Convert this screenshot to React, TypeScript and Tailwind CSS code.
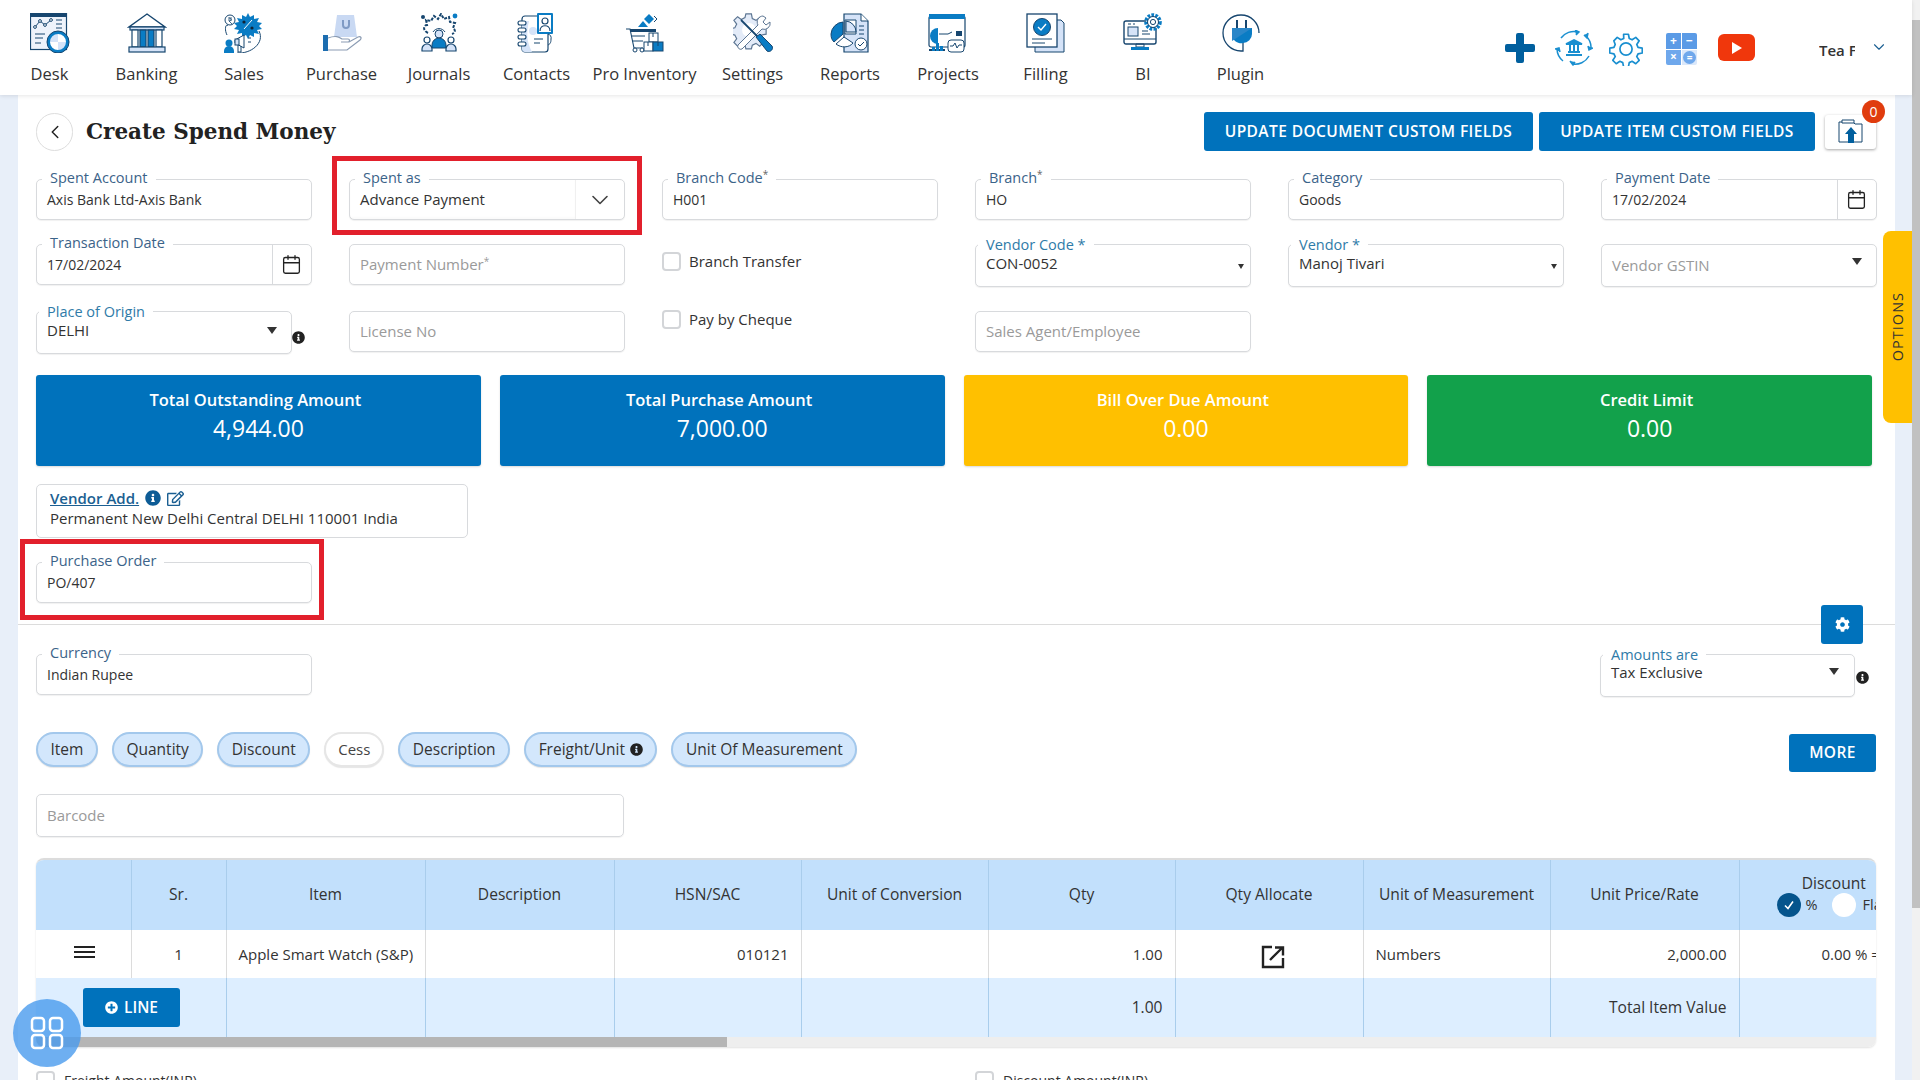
import React from "react";
import clsx from "clsx";
import { Calendar, ChevronDown, ChevronLeft } from "lucide-react";
import { FaInfoCircle, FaRegEdit, FaCog, FaPlusCircle } from "react-icons/fa";

const N = "#17466f";
const B = "#0a7cc4";
const L = "#d5e3f8";

const I = ({ children }: { children: React.ReactNode }) => (
  <svg width="40" height="40" viewBox="0 0 40 40" fill="none" stroke={N} strokeWidth="1">
    {children}
  </svg>
);

const Desk = () => (
  <I>
    <rect x="0.5" y="0.5" width="36" height="36" fill="#eef3fb" strokeWidth="1.2" />
    <rect x="0.5" y="0.5" width="36" height="3" fill={N} />
    <polyline points="5,14 10,8 15,12 21,7" stroke={N} />
    <circle cx="5" cy="14" r="1.4" fill="#fff" /><circle cx="10" cy="8" r="1.4" fill="#fff" /><circle cx="15" cy="12" r="1.4" fill="#fff" /><circle cx="21" cy="7" r="1.4" fill="#fff" />
    <path d="M26 7h6M26 11h6M26 15h6M5 21h10M5 25h8M5 30h6" />
    <circle cx="28" cy="29" r="11" fill={B} stroke={N} />
    <path d="M28 21a8 8 0 0 1 8 8h-8zM28 29h-8a8 8 0 0 0 8 8z" fill="#fff" stroke="none" />
    <path d="M28 21a8 8 0 0 0-8 8h8zM28 29h8a8 8 0 0 1-8 8z" fill={L} stroke="none" />
  </I>
);
const Banking = () => (
  <I>
    <path d="M20 1 L38 14 H2 Z" fill="#fff" strokeWidth="1.4" />
    <rect x="3" y="14" width="34" height="3" fill={L} strokeWidth="1.2" />
    {[5, 13, 21, 29].map((x, i) => (
      <rect key={x} x={x} y="17" width="6" height="17" fill={i === 1 || i === 2 ? B : "#fff"} strokeWidth="1.2" />
    ))}
    <rect x="2" y="34" width="36" height="5" fill={L} strokeWidth="1.2" />
  </I>
);
const Sales = () => (
  <I>
    <circle cx="6" cy="7" r="5" fill="#fff" />
    <path d="M4 5h4M4 7h4M5 5c3 0 3 3 0 3l3 3" strokeWidth=".8" />
    <path d="M24 0l2 4 4-2 0 4 5-1-2 4 5 1-3 3 3 3-5 1 2 4-5-1 0 4-4-2-2 4-2-4-4 2 0-4-5 1 2-4-5-1 3-3-3-3 5-1-2-4 5 1 0-4 4 2z" fill={B} stroke="none" />
    <path d="M20 16l8-9" stroke="#fff" /><circle cx="20" cy="9" r="1.6" fill="#123" stroke="none" /><circle cx="28" cy="15" r="1.6" fill="#123" stroke="none" />
    <circle cx="5" cy="30" r="3.5" fill={B} stroke="none" />
    <path d="M0 40v-2a5 5 0 0 1 10 0v2z" fill={B} stroke="none" />
    <path d="M11 27l9-5v13l-9-5z" fill="#fff" /><rect x="11" y="26" width="4" height="6" fill={L} />
    <path d="M14 32v7h3v-6" />
    <path d="M24 25h3M24 29h3M3 22C0 16 2 10 4 13M13 40c14 1 28-10 22-22" />
  </I>
);
const Purchase = () => (
  <I>
    <path d="M15 2h17l3 22H12z" fill="#c9d9f3" stroke="none" />
    <path d="M21 7v5a3 3 0 0 0 6 0V7" stroke="#7f9ac4" strokeWidth="2" />
    <rect x="1" y="22" width="5" height="16" fill="#1c6db0" stroke="none" />
    <path d="M6 25c8-3 11-1 14 1h6c2 0 2 3 0 3h-7 8l9-5c3-1 4 1 2 3L25 37H6" fill="#fff" stroke="#8b9cb3" strokeWidth="1.2" />
  </I>
);
const Journals = () => (
  <I>
    <path d="M9 20C3 17 5 12 8 12l-1-5 5 1 3-5 4 3 3-5 3 5 5-2 1 5 5 1-2 5c3 2 2 5-1 6" strokeWidth="2" strokeDasharray="3 1.4" />
    <circle cx="36" cy="3" r="2.4" fill={B} stroke="none" /><circle cx="4" cy="4" r="2" fill={N} stroke="none" />
    <path d="M14 19a7 7 0 0 1 12 0" strokeWidth="1" />
    <circle cx="20" cy="21" r="4" fill={L} />
    <path d="M13 35v-3a7 7 0 0 1 14 0v3z" fill={B} />
    <circle cx="8" cy="27" r="3" fill="#fff" strokeWidth="1.2" /><circle cx="32" cy="27" r="3" fill="#fff" strokeWidth="1.2" />
    <path d="M3 38v-2a5 5 0 0 1 10 0v2zM27 38v-2a5 5 0 0 1 10 0v2z" fill={L} strokeWidth="1.2" />
  </I>
);
const Contacts = () => (
  <I>
    <rect x="5" y="3" width="26" height="36" rx="3" fill="#fff" strokeWidth="1.2" />
    <path d="M5 8h7c-3 12-2 22 3 31H8a3 3 0 0 1-3-3z" fill={L} stroke="none" />
    {[8, 15, 22, 29].map((y) => (
      <rect key={y} x="1" y={y} width="8" height="4" rx="2" fill="#fff" strokeWidth="1.1" />
    ))}
    <rect x="20" y="0" width="16" height="21" rx="1" fill={B} stroke="none" />
    <rect x="22" y="2" width="12" height="17" fill="#fff" stroke="none" />
    <circle cx="28" cy="8" r="3" stroke={N} strokeWidth="1.2" />
    <path d="M23 18c0-7 10-7 10 0" strokeWidth="1.2" />
    <path d="M31 21a4 4 0 0 1 3 5c0 4-1 5-3 6" />
    <path d="M17 26h9M17 30h6" />
    <circle cx="16" cy="18" r="4" fill={L} stroke="none" />
  </I>
);
const Inventory = () => (
  <I>
    <path d="M24 1l5 5-5 5-5-5z" fill={B} stroke="none" />
    <path d="M29 3l3 3-3 3" fill="#fff" />
    <path d="M13 14l5-6 5 6z" fill={B} stroke="none" />
    <path d="M1 16h4l4 19h9" strokeWidth="1.1" />
    <rect x="5" y="16" width="26" height="3" fill={N} stroke="none" />
    <path d="M7 23h13M8 28h10" />
    <circle cx="10" cy="37" r="2" fill="#fff" /><circle cx="17" cy="37" r="2" fill="#fff" />
    <rect x="24" y="20" width="9" height="9" fill="#fff" /><rect x="19" y="29" width="9" height="9" fill="#fff" /><rect x="28" y="29" width="10" height="9" fill={B} />
    <path d="M28 20v4M23 29v4M33 29v4" />
  </I>
);
const Settings = () => (
  <I>
    <path d="M14 1h6l1 5 4 2 4-3 4 4-3 4 1 3 5 1v6l-5 1-1 4 3 4-4 4-4-3-4 2-1 4h-6l-1-4-4-2-4 3-4-4 3-4-2-4-5-1v-6l5-1 2-4-3-4 4-4 4 3 4-2z" fill="#e3ebf8" stroke="#5d7693" strokeWidth="1.3" transform="scale(.92)" />
    <circle cx="16" cy="17" r="7" fill="#fff" stroke="none" />
    <path d="M30 2a6 6 0 0 0-5 9L5 31a3 3 0 0 0 4 4L29 15a6 6 0 0 0 8-7l-4 3-3-3 3-4z" fill="#fff" stroke="#5d7693" transform="translate(0 1)" />
    <path d="M8 7l17 17" stroke="#17466f" strokeWidth="1.8" />
    <path d="M23 24l4-3 12 12c2 3-2 7-5 5z" fill={B} stroke={N} />
  </I>
);
const Reports = () => (
  <I>
    <path d="M14 1h17l7 7v31H14z" fill={L} strokeWidth="1.2" />
    <path d="M31 1v7h7" fill="#fff" />
    <path d="M15 7h11v14H15z" fill="#fff" />
    <path d="M16 8a11 11 0 0 1 10 11H16z" fill={L} />
    <path d="M13 9a13 13 0 0 0-12 12c0 4 1 6 3 8l9-8z" fill={B} />
    <path d="M14 24l-8 7c5 4 13 4 17-1z" fill="#fff" stroke={N} />
    <path d="M29 13h5M29 17h5M29 21h5" />
    <circle cx="31" cy="31" r="6" fill="#fff" /><path d="M28 31l2 2 4-4" />
  </I>
);
const Projects = () => (
  <I>
    <rect x="1" y="3" width="36" height="31" rx="2" fill="#fff" strokeWidth="1.2" />
    <rect x="1" y="1" width="36" height="5" fill={B} stroke="none" />
    <path d="M10 15a8 8 0 0 0 0 16z" fill={B} stroke="none" />
    <path d="M11 21h9l4-2" /><rect x="28" y="18" width="6" height="5" fill={N} stroke="none" />
    <path d="M1 37h16" strokeWidth="2" />
    <rect x="4" y="34" width="3" height="4" fill={B} stroke="none" /><rect x="8" y="30" width="3" height="8" fill={B} stroke="none" /><rect x="12" y="33" width="3" height="5" fill={B} stroke="none" />
    <rect x="20" y="27" width="16" height="12" rx="3" fill="#fff" />
    <path d="M22 33h3l2-3 2 5 2-3h3" />
  </I>
);
const Filling = () => (
  <I>
    <path d="M9 7h26l3 3v29H9z" fill={L} strokeWidth="1" />
    <rect x="1" y="1" width="30" height="33" fill="#fff" strokeWidth="1.3" />
    <circle cx="16" cy="14" r="8.5" fill={B} stroke={N} />
    <path d="M12 14l3 3 5-6" stroke="#fff" strokeWidth="1.4" />
    <path d="M6 26h20M6 30h13" />
  </I>
);
const BI = () => (
  <I>
    <rect x="1" y="8" width="32" height="23" rx="2" fill="#fff" strokeWidth="1.4" />
    <path d="M1 26h32" />
    <rect x="5" y="14" width="10" height="9" fill={L} />
    <path d="M5 11h3M10 11h2M19 18h6M19 21h8M13 31h8v3h-8z" />
    <path d="M8 34h18v3H8z" fill={B} stroke="none" />
    <circle cx="30" cy="9" r="7" fill="#fff" stroke={B} strokeWidth="3.6" strokeDasharray="2.6 1.3" />
    <circle cx="30" cy="9" r="5.5" stroke={N} strokeWidth="1" />
    <circle cx="30" cy="9" r="2.6" fill="#fff" stroke={N} />
  </I>
);
const Plugin = () => (
  <I>
    <path d="M38 20A18 18 0 1 0 20 38h2v-10" strokeWidth="1.3" />
    <path d="M16 7v8M25 7v8" strokeWidth="2" />
    <path d="M11 15h20v6a9 9 0 0 1-9 9 9 9 0 0 1-11-9z" fill={B} stroke="none" />
    <path d="M11 15h20L11 28z" fill="#2a86c8" stroke="none" />
  </I>
);

const nav: [string, React.FC, string][] = [
  ["Desk", Desk, "w-[97px]"],
  ["Banking", Banking, "w-[97px]"],
  ["Sales", Sales, "w-[98px]"],
  ["Purchase", Purchase, "w-[97px]"],
  ["Journals", Journals, "w-[98px]"],
  ["Contacts", Contacts, "w-[97px]"],
  ["Pro Inventory", Inventory, "w-[119px]"],
  ["Settings", Settings, "w-[97px]"],
  ["Reports", Reports, "w-[98px]"],
  ["Projects", Projects, "w-[98px]"],
  ["Filling", Filling, "w-[97px]"],
  ["BI", BI, "w-[98px]"],
  ["Plugin", Plugin, "w-[97px]"],
];

const Header = () => (
  <header className="relative z-10 flex h-[95px] shrink-0 bg-white pl-[1px] shadow-[0_1px_4px_rgba(0,0,0,0.1)]">
    {nav.map(([name, Icon, w]) => (
      <div key={name} className={clsx("flex flex-col items-center pt-[13px]", w)}>
        <Icon />
        <span className="mt-[10px] whitespace-nowrap text-[16.5px] leading-[22px] text-[#333]">{name}</span>
      </div>
    ))}
    <div className="ml-[216px] flex items-start">
      <svg className="mt-[33px]" width="30" height="30" viewBox="0 0 30 30"><path d="M11 2a2 2 0 0 1 2-2h4a2 2 0 0 1 2 2v9h9a2 2 0 0 1 2 2v4a2 2 0 0 1-2 2h-9v9a2 2 0 0 1-2 2h-4a2 2 0 0 1-2-2v-9H2a2 2 0 0 1-2-2v-4a2 2 0 0 1 2-2h9z" fill="#005f9e" /></svg>
      <svg className="ml-[20px] mt-[30px]" width="38" height="36" viewBox="0 0 38 36" fill="none" stroke="#1a8fd0" strokeWidth="1.5">
        <path d="M6 8A16 16 0 0 1 23 2M31 6a16 16 0 0 1 5 13M34 26a16 16 0 0 1-17 8M8 31a16 16 0 0 1-6-12" />
        <path d="M20 0l4 2-3 3M33 3l-1 5-3-3M38 18l-4 2-1-4M15 31l3 4 2-3M0 19l4-1 1 4" fill="#1a8fd0" />
        <path d="M11 14l8-4 8 4zM11 25h16M13 22h12" fill="#1a8fd0" strokeWidth="1.8" />
        <path d="M15 15v6M19 15v6M23 15v6" strokeWidth="2" />
      </svg>
      <svg className="ml-[16px] mt-[32px]" width="34" height="34" viewBox="0 0 24 24" fill="none" stroke="#1a8fd0" strokeWidth="1.2"><path d="M10.300 1.600h3.400l.6 3 2 .9 2.600-1.700 2.400 2.400-1.700 2.600.9 2 3 .6v3.400l-3 .6-.9 2 1.700 2.600-2.400 2.400-2.600-1.700-2 .9-.6 3h-3.400l-.6-3-2-.9-2.600 1.700-2.400-2.400 1.700-2.600-.9-2-3-.6v-3.400l3-.6.9-2L3.400 6.200l2.400-2.400 2.600 1.700 2-.9z" strokeLinejoin="round" /><circle cx="12" cy="12" r="4.300" /></svg>
      <div className="ml-[23px] mt-[33px] grid h-[32px] w-[31px] grid-cols-2 grid-rows-2 gap-[1px] text-[12px] font-bold leading-none text-white">
        <span className="flex items-center justify-center rounded-tl-[2px] bg-[#5b9be6]">+</span>
        <span className="flex items-center justify-center rounded-tr-[2px] bg-[#5b9be6]">−</span>
        <span className="flex items-center justify-center rounded-bl-[2px] bg-[#6fa8ec]">×</span>
        <span className="flex items-center justify-center rounded-br-[2px] bg-[#dbe8fa]"><span className="flex h-[13px] w-[13px] items-center justify-center rounded-full bg-[#6fa8ec] text-[10px]">=</span></span>
      </div>
      <div className="ml-[21px] mt-[34px] flex h-[27px] w-[37px] items-center justify-center rounded-[6px] bg-[#f0370c]">
        <svg width="10" height="12" viewBox="0 0 10 12"><path d="M0 0l10 6-10 6z" fill="#fff" /></svg>
      </div>
      <span className="ml-[64px] mt-[40px] w-[36px] overflow-hidden whitespace-nowrap text-[15px] font-semibold leading-[20px] text-[#333]">Tea Factory</span>
      <ChevronDown className="ml-[15px] mt-[38px]" size={18} strokeWidth={1.5} color="#1b5f92" />
    </div>
  </header>
);

type FieldProps = { label?: string; sup?: boolean; teal?: boolean; className?: string; children?: React.ReactNode };
const Field = ({ label, sup, teal, className, children }: FieldProps) => (
  <div className={clsx("relative flex h-[41px] items-center rounded-[5px] border border-[#d8dadd] bg-white text-[14px] text-[#333] shadow-[0_1px_1px_rgba(0,0,0,0.06)]", className)}>
    {label && (
      <span className={clsx("absolute whitespace-nowrap bg-white px-[8px] text-[14.5px] leading-[20px]", teal ? "left-[2px] top-[-10px] text-[#2f7ba8]" : "left-[5px] top-[-12px] text-[#3b6389]")}>
        {label}
        {sup && <sup className="text-[10px] text-[#666]">*</sup>}
      </span>
    )}
    {children}
  </div>
);
const Val = ({ children, big }: { children: React.ReactNode; big?: boolean }) => <span className={clsx("pl-[10px] whitespace-nowrap", big && "text-[15px]")}>{children}</span>;
const Ph = ({ children }: { children: React.ReactNode }) => <span className="pl-[10px] whitespace-nowrap text-[15px] text-[#9a9a9a]">{children}</span>;
const DateField = ({ label, value }: { label: string; value: string }) => (
  <Field label={label} className="items-stretch">
    <span className="flex flex-1 items-center pl-[10px] text-[14px]">{value}</span>
    <span className="flex w-[39px] items-center justify-center border-l border-[#d8dadd]">
      <Calendar size={21} strokeWidth={1.5} color="#222" />
    </span>
  </Field>
);
const Check = ({ label }: { label: string }) => (
  <label className="flex items-center gap-[8px] text-[15px] text-[#333]">
    <span className="h-[19px] w-[19px] rounded-[4px] border-2 border-[#d3d5d8] bg-white" />
    {label}
  </label>
);
const Info = ({ className }: { className?: string }) => <FaInfoCircle size={13} color="#222" className={className} />;

const Card = ({ title, value, color }: { title: string; value: string; color: string }) => (
  <div className={clsx("flex h-[91px] flex-col items-center rounded-[3px] pt-[14px] text-white shadow-[0_1px_2px_rgba(0,0,0,0.15)]", color)}>
    <span className="pr-[6px] text-[16.5px] font-semibold leading-[22px]">{title}</span>
    <span className="mt-[1px] text-[23px] leading-[32px]">{value}</span>
  </div>
);

const Pill = ({ children, off }: { children: React.ReactNode; off?: boolean }) => (
  <span className={clsx("flex h-[35px] items-center gap-[5px] rounded-full border-2 leading-none shadow-[0_1px_1px_rgba(0,0,0,0.1)]", off ? "border-[#e6e6e6] bg-white px-[12px] text-[15px] text-[#444]" : "border-[#a3c8ec] bg-[#d3e7fc] px-[12.5px] text-[15.5px] text-[#333]")}>
    {children}
  </span>
);

const widths = ["w-[94px]", "w-[95px]", "w-[199px]", "w-[189px]", "w-[187px]", "w-[187px]", "w-[187px]", "w-[188px]", "w-[187px]", "w-[189px]", "w-[189px]"];
const heads = ["", "Sr.", "Item", "Description", "HSN/SAC", "Unit of Conversion", "Qty", "Qty Allocate", "Unit of Measurement", "Unit Price/Rate"];
const th = "border-r border-[#a9cdec] align-middle text-center text-[15.6px] font-medium text-[#333]";
const td = "border-r border-[#dcdcdc] px-[12px] text-[15px] text-[#333]";
const tf = "border-r border-[#a9cdec] px-[12px] text-[15.6px] text-[#333]";

const Table = () => (
  <div className="mt-[21px] h-[189px] overflow-hidden rounded-[8px] border-t-2 border-[#dcdcdc] shadow-[0_1px_2px_rgba(0,0,0,0.12)]">
    <table className="w-[1881px] table-fixed border-collapse">
      <colgroup>
        <col className="w-[1px]" />
        {widths.map((w, i) => (
          <col key={i} className={w} />
        ))}
      </colgroup>
      <tbody>
        <tr className="h-[70px] bg-[#c2e0fc]">
          <td />
          {heads.map((h) => (
            <td key={h} className={th}>{h}</td>
          ))}
          <td className="whitespace-nowrap align-middle text-[15.6px] font-medium text-[#333]">
            <div className="text-center leading-[20px]">Discount</div>
            <div className="flex items-center gap-[5px] pl-[37px] text-[14.5px]">
              <span className="flex h-[24px] w-[24px] items-center justify-center rounded-full bg-[#05548c]">
                <svg width="12" height="12" viewBox="0 0 12 12" fill="none" stroke="#fff" strokeWidth="1.600"><path d="M2 6.500l3 3 5-7" /></svg>
              </span>
              <span>%</span>
              <span className="ml-[9px] h-[24px] w-[24px] rounded-full bg-white" />
              <span className="ml-[2px]">Flat</span>
            </div>
          </td>
        </tr>
        <tr className="h-[48px] bg-white">
          <td />
          <td className={clsx(td, "text-center")}>
            <div className="mx-auto mb-[5px] h-[12px] w-[21px] translate-x-[1px] border-y-2 border-[#222] after:mt-[3px] after:block after:h-[2px] after:bg-[#222]" />
          </td>
          <td className={clsx(td, "text-center")}>1</td>
          <td className={clsx(td, "whitespace-nowrap")}>Apple Smart Watch (S&amp;P)</td>
          <td className={td} />
          <td className={clsx(td, "text-right")}>010121</td>
          <td className={td} />
          <td className={clsx(td, "text-right")}>1.00</td>
          <td className={clsx(td, "text-center")}>
            <svg className="ml-[73px] mt-[5px]" width="24" height="24" viewBox="0 0 24 24" fill="none" stroke="#222" strokeWidth="2.400"><path d="M11 2H2v20h20v-9M9 15L21 3M14 2.500h8v8" /></svg>
          </td>
          <td className={clsx(td, "whitespace-nowrap")}>Numbers</td>
          <td className={clsx(td, "text-right")}>2,000.00</td>
          <td className="whitespace-nowrap pl-[82px] text-[15px] text-[#333]">0.00 % = 0.00</td>
        </tr>
        <tr className="h-[59px] bg-[#ddeeff]">
          <td />
          <td colSpan={2} className={tf}>
            <button className="ml-[34px] flex h-[39px] w-[97px] items-center justify-center gap-[6px] rounded-[3px] bg-[#0072bc] text-[15.5px] font-semibold text-white">
              <FaPlusCircle size={13} />LINE
            </button>
          </td>
          <td className={tf} /><td className={tf} /><td className={tf} /><td className={tf} />
          <td className={clsx(tf, "text-right font-medium")}>1.00</td>
          <td className={tf} /><td className={tf} />
          <td className={clsx(tf, "whitespace-nowrap text-right font-medium")}>Total Item Value</td>
          <td />
        </tr>
      </tbody>
    </table>
    <div className="h-[10px] bg-[#eeeeee]"><div className="h-full w-[691px] bg-[#b5b5b5]" /></div>
  </div>
);

const Caret = ({ className }: { className: string }) => <span className={clsx("ml-auto inline-block border-x-transparent border-t-[#333]", className)} />;

export default function App() {
  return (
    <div className="relative flex h-[1080px] w-[1920px] overflow-hidden bg-[#e8eff9] font-['Open_Sans',sans-serif]">
      <div className="flex w-[1912px] flex-col">
        <Header />
        <main className="ml-[18px] mr-[17px] flex-1 bg-white pl-[18px] pr-[19px]">
          <div className="flex h-[84px] items-start">
            <span className="mt-[18px] flex h-[38px] w-[37px] items-center justify-center rounded-full border border-[#ddd]">
              <ChevronLeft size={22} strokeWidth={1.6} color="#222" />
            </span>
            <h1 className="ml-[13px] mt-[21px] font-['DejaVu_Serif',serif] text-[21.5px] font-bold leading-[32px] text-[#222]">Create Spend Money</h1>
            <div className="ml-auto flex items-start pt-[17px]">
              <button className="flex h-[39px] w-[329px] items-center justify-center rounded-[3px] bg-[#0072bc] text-[15.5px] font-semibold tracking-[0.4px] text-white">UPDATE DOCUMENT CUSTOM FIELDS</button>
              <button className="ml-[6px] flex h-[39px] w-[276px] items-center justify-center rounded-[3px] bg-[#0072bc] text-[15.5px] font-semibold tracking-[0.4px] text-white">UPDATE ITEM CUSTOM FIELDS</button>
              <div className="relative ml-[10px] mt-[3px] flex h-[34px] w-[51px] items-center justify-center rounded-[3px] bg-white shadow-[0_1px_3px_rgba(0,0,0,0.35)]">
                <svg width="26" height="26" viewBox="0 0 26 26" fill="none" stroke="#17466f"><path d="M1 3h14l2 2h7v18H1z" fill="#fff" /><path d="M4 1h12v3H4z" fill="#fff" /><path d="M13 8l6 7h-3v9h-6v-9H7z" fill="#005f9e" stroke="none" /></svg>
                <span className="absolute right-[-9px] top-[-15px] flex h-[23px] w-[23px] items-center justify-center rounded-full bg-[#e03c0e] text-[14px] text-white">0</span>
              </div>
            </div>
          </div>

          <div className="grid grid-cols-[repeat(6,275.5px)] grid-rows-[65px_67px_43px] items-start gap-x-[37.5px]">
            <Field label="Spent Account"><Val>Axis Bank Ltd-Axis Bank</Val></Field>
            <Field label="Spent as" className="items-stretch">
              <span className="flex flex-1 items-center border-r border-[#f0f0f0] pl-[10px] text-[15px] shadow-[inset_0_-2px_2px_rgba(0,0,0,0.02)]">Advance Payment</span>
              <span className="flex w-[48px] items-center justify-center"><ChevronDown size={28} strokeWidth={1.4} color="#444" /></span>
            </Field>
            <Field label="Branch Code" sup><Val>H001</Val></Field>
            <Field label="Branch" sup><Val>HO</Val></Field>
            <Field label="Category"><Val>Goods</Val></Field>
            <DateField label="Payment Date" value="17/02/2024" />

            <DateField label="Transaction Date" value="17/02/2024" />
            <Field><Ph>Payment Number<sup className="text-[10px]">*</sup></Ph></Field>
            <div className="pt-[6px]"><Check label="Branch Transfer" /></div>
            <Field label="Vendor Code *" teal className="h-[43px] items-start pt-[7px]"><Val big>CON-0052</Val><Caret className="mr-[6px] mt-[12px] border-x-[3.5px] border-t-[5px]" /></Field>
            <Field label="Vendor *" teal className="h-[43px] items-start pt-[7px]"><Val big>Manoj Tivari</Val><Caret className="mr-[6px] mt-[12px] border-x-[3.5px] border-t-[5px]" /></Field>
            <Field className="h-[43px]"><Ph>Vendor GSTIN</Ph><Caret className="mb-[8px] mr-[14px] border-x-[5.5px] border-t-[7px]" /></Field>

            <div className="flex items-start">
              <Field label="Place of Origin" teal className="h-[43px] w-[256px] items-start pt-[7px]"><Val big>DELHI</Val><Caret className="mr-[14px] mt-[8px] border-x-[5.5px] border-t-[7px]" /></Field>
              <Info className="mt-[20px]" />
            </div>
            <Field><Ph>License No</Ph></Field>
            <div className="mt-[-3px]"><Check label="Pay by Cheque" /></div>
            <Field><Ph>Sales Agent/Employee</Ph></Field>
          </div>

          <div className="mt-[21px] grid w-[1836px] grid-cols-4 gap-x-[19px]">
            <Card title="Total Outstanding Amount" value="4,944.00" color="bg-[#0072bc]" />
            <Card title="Total Purchase Amount" value="7,000.00" color="bg-[#0072bc]" />
            <Card title="Bill Over Due Amount" value="0.00" color="bg-[#ffc000]" />
            <Card title="Credit Limit" value="0.00" color="bg-[#12a14b]" />
          </div>

          <div className="mt-[18px] h-[54px] w-[432px] rounded-[5px] border border-[#d8dadd] pl-[13px] pt-[3px] text-[15px] text-[#333]">
            <div className="flex items-center gap-[6px] leading-[20px]">
              <span className="font-semibold text-[#1b5f92] underline">Vendor Add.</span>
              <FaInfoCircle size={16} color="#0d5c96" />
              <FaRegEdit size={17} color="#1b5f92" />
            </div>
            <div className="leading-[20px]">Permanent New Delhi Central DELHI 110001 India</div>
          </div>

          <Field label="Purchase Order" className="mt-[24px] w-[276px]"><Val>PO/407</Val></Field>

          <div className="relative mt-[21px] ml-[-18px] mr-[-19px] border-t border-[#dcdcdc]">
            <button className="absolute right-[32px] top-[-20px] flex h-[39px] w-[42px] items-center justify-center rounded-[3px] bg-[#0072bc]"><FaCog size={15} color="#fff" /></button>
          </div>

          <div className="mt-[29px] flex h-[43px] items-start justify-between">
            <Field label="Currency" className="w-[276px]"><Val>Indian Rupee</Val></Field>
            <div className="flex items-start pr-[7px]">
              <Field label="Amounts are" teal className="h-[43px] w-[255px] items-start pt-[6px]"><Val big>Tax Exclusive</Val><Caret className="mr-[15px] mt-[7px] border-x-[5.5px] border-t-[7px]" /></Field>
              <Info className="ml-[1px] mt-[17px]" />
            </div>
          </div>

          <div className="mt-[35px] flex items-start justify-between">
            <div className="flex gap-[14px]">
              <Pill>Item</Pill>
              <Pill>Quantity</Pill>
              <Pill>Discount</Pill>
              <Pill off>Cess</Pill>
              <Pill>Description</Pill>
              <Pill>Freight/Unit <Info /></Pill>
              <Pill>Unit Of Measurement</Pill>
            </div>
            <button className="mt-[2px] flex h-[38px] w-[87px] items-center justify-center rounded-[3px] bg-[#0072bc] text-[15.5px] font-semibold tracking-[0.4px] text-white">MORE</button>
          </div>

          <div className="mt-[22px] flex h-[43px] w-[588px] items-center rounded-[5px] border border-[#d8dadd] pl-[10px] text-[15px] text-[#9a9a9a] shadow-[0_1px_1px_rgba(0,0,0,0.06)]">Barcode</div>

          <Table />

          <div className="mt-[23px] grid grid-cols-[939px_1fr] text-[14px] text-[#333]">
            <div className="flex items-center gap-[9px]"><span className="h-[19px] w-[19px] rounded-[4px] border-2 border-[#d3d5d8]" />Freight Amount(INR)</div>
            <div className="flex items-center gap-[9px]"><span className="h-[19px] w-[19px] rounded-[4px] border-2 border-[#d3d5d8]" />Discount Amount(INR)</div>
          </div>
        </main>
      </div>

      <div className="w-[8px] bg-[#f1f1f1] pt-[20px]"><div className="h-[888px] bg-[#c1c1c1]" /></div>

      <div className="absolute left-[1883px] top-[231px] flex h-[192px] w-[29px] items-center justify-center rounded-l-[8px] bg-[#ffc000]">
        <span className="rotate-180 text-[14.5px] uppercase tracking-[1px] text-[#333] [writing-mode:vertical-rl]">Options</span>
      </div>

      <div className="absolute left-[332px] top-[156px] h-[79px] w-[310px] border-[5px] border-[#e2202c]" />
      <div className="absolute left-[20px] top-[539px] h-[81px] w-[304px] border-[5px] border-[#e2202c]" />

      <div className="absolute left-[13px] top-[999px] flex h-[68px] w-[68px] items-center justify-center rounded-full bg-[#4a9bee]/80">
        <svg width="34" height="34" viewBox="0 0 34 34" fill="none" stroke="#fff" strokeWidth="2.500">
          <rect x="2" y="2" width="12" height="13" rx="3" /><rect x="20" y="2" width="12" height="13" rx="3" /><rect x="2" y="19" width="12" height="13" rx="3" /><rect x="20" y="19" width="12" height="13" rx="3" />
        </svg>
      </div>
    </div>
  );
}
